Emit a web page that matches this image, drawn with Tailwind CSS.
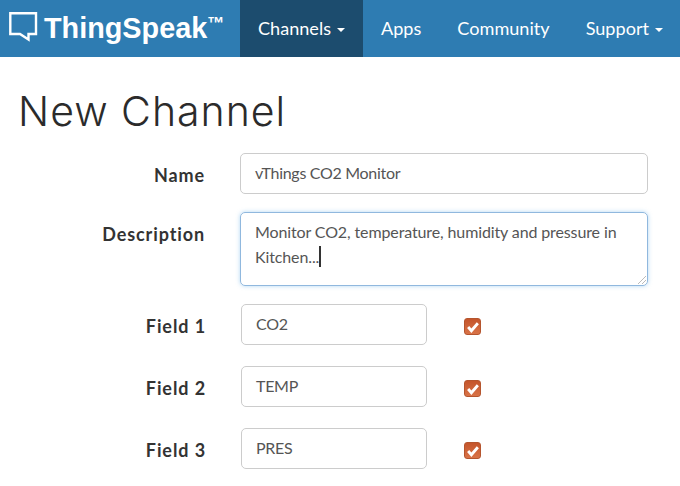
<!DOCTYPE html>
<html lang="en">
<head>
    <meta charset="UTF-8">
    <title>New Channel</title>
    <script src="https://cdn.jsdelivr.net/npm/@tailwindcss/browser@4"></script>
</head>
<body class="bg-white font-['Lato',sans-serif] overflow-hidden">
    <nav class="h-[57px] bg-[#2e7cb2] flex text-white text-[18.1px]">
        <div class="w-[240px] pl-[9px] flex items-center">
            <svg width="30" height="32" viewBox="0 0 30 32" fill="none" class="shrink-0 self-start mt-[12px]">
                <path d="M1.3 1.3H27V22H19.5V27.5L11 22H1.3Z" stroke="white" stroke-width="2.4"/>
            </svg>
            <span class="ml-[5px] font-['Liberation_Sans',sans-serif] font-bold text-[28.8px]">ThingSpeak</span>
            <span class="font-['Liberation_Sans',sans-serif] font-bold text-[17px] mb-[9px]">™</span>
        </div>
        <a class="w-[123px] bg-[#1c4c6e] pl-[18px] flex items-center gap-[6px]">Channels <span class="border-x-[4px] border-x-transparent border-t-[4px] border-t-white mt-[2px]"></span></a>
        <a class="px-[18px] flex items-center">Apps</a>
        <a class="px-[18px] flex items-center">Community</a>
        <a class="pl-[18px] flex items-center gap-[6px]">Support <span class="border-x-[4px] border-x-transparent border-t-[4px] border-t-white mt-[2px]"></span></a>
    </nav>

    <h1 class="ml-[18px] mt-[30px] h-[48px] leading-[48px] text-[41px] font-light font-['Inter',sans-serif] tracking-[1px] text-[#2b2b2b]">New Channel</h1>

    <form class="mt-[18px] text-[16px] tracking-[-0.3px] text-[#555]">
        <div class="flex items-start h-[41px]">
            <label class="w-[205px] text-right font-bold text-[18px] tracking-[0.9px] text-[#333] leading-[44px]">Name</label>
            <div class="ml-[35px] w-[408px] h-[41px] border border-[#ccc] rounded-[5px] px-[14px] leading-[38px]">vThings CO2 Monitor</div>
        </div>
        <div class="flex items-start mt-[18px] h-[74px]">
            <label class="w-[205px] text-right font-bold text-[18px] tracking-[0.9px] text-[#333] leading-[44px]">Description</label>
            <div class="relative ml-[35px] w-[408px] h-[74px] border border-[#90b8de] rounded-[5px] px-[14px] py-[6px] leading-[25px] tracking-[-0.12px] shadow-[0_0_4px_rgba(102,175,233,0.5)]">
                <div>Monitor CO2, temperature, humidity and pressure in</div>
                <div class="flex items-center">Kitchen...<span class="w-[1.5px] h-[21px] bg-[#333]"></span></div>
                <svg width="9" height="9" viewBox="0 0 9 9" class="absolute right-[1px] bottom-[1px]"><path d="M9 1L1 9M9 5L5 9" stroke="#bbb"/></svg>
            </div>
        </div>
        <div class="flex items-start mt-[18px] h-[41px]">
            <label class="w-[206px] text-right font-bold text-[18px] tracking-[0.9px] text-[#333] leading-[44px]">Field 1</label>
            <div class="ml-[35px] w-[186px] h-[41px] border border-[#ccc] rounded-[5px] px-[14px] leading-[38px]">CO2</div>
            <span class="ml-[37px] mt-[14px] w-[17px] h-[17px] rounded-[3px] border border-[#b5552e] bg-linear-to-b from-[#c4552b] to-[#d97347] flex items-center justify-center">
                <svg width="14" height="14" viewBox="0 0 13 13" fill="none"><path d="M2 6.5L5 10L11 3" stroke="white" stroke-width="2.6"/></svg>
            </span>
        </div>
        <div class="flex items-start mt-[21px] h-[41px]">
            <label class="w-[206px] text-right font-bold text-[18px] tracking-[0.9px] text-[#333] leading-[44px]">Field 2</label>
            <div class="ml-[35px] w-[186px] h-[41px] border border-[#ccc] rounded-[5px] px-[14px] leading-[38px]">TEMP</div>
            <span class="ml-[37px] mt-[14px] w-[17px] h-[17px] rounded-[3px] border border-[#b5552e] bg-linear-to-b from-[#c4552b] to-[#d97347] flex items-center justify-center">
                <svg width="14" height="14" viewBox="0 0 13 13" fill="none"><path d="M2 6.5L5 10L11 3" stroke="white" stroke-width="2.6"/></svg>
            </span>
        </div>
        <div class="flex items-start mt-[21px] h-[41px]">
            <label class="w-[206px] text-right font-bold text-[18px] tracking-[0.9px] text-[#333] leading-[44px]">Field 3</label>
            <div class="ml-[35px] w-[186px] h-[41px] border border-[#ccc] rounded-[5px] px-[14px] leading-[38px]">PRES</div>
            <span class="ml-[37px] mt-[14px] w-[17px] h-[17px] rounded-[3px] border border-[#b5552e] bg-linear-to-b from-[#c4552b] to-[#d97347] flex items-center justify-center">
                <svg width="14" height="14" viewBox="0 0 13 13" fill="none"><path d="M2 6.5L5 10L11 3" stroke="white" stroke-width="2.6"/></svg>
            </span>
        </div>
    </form>
</body>
</html>
